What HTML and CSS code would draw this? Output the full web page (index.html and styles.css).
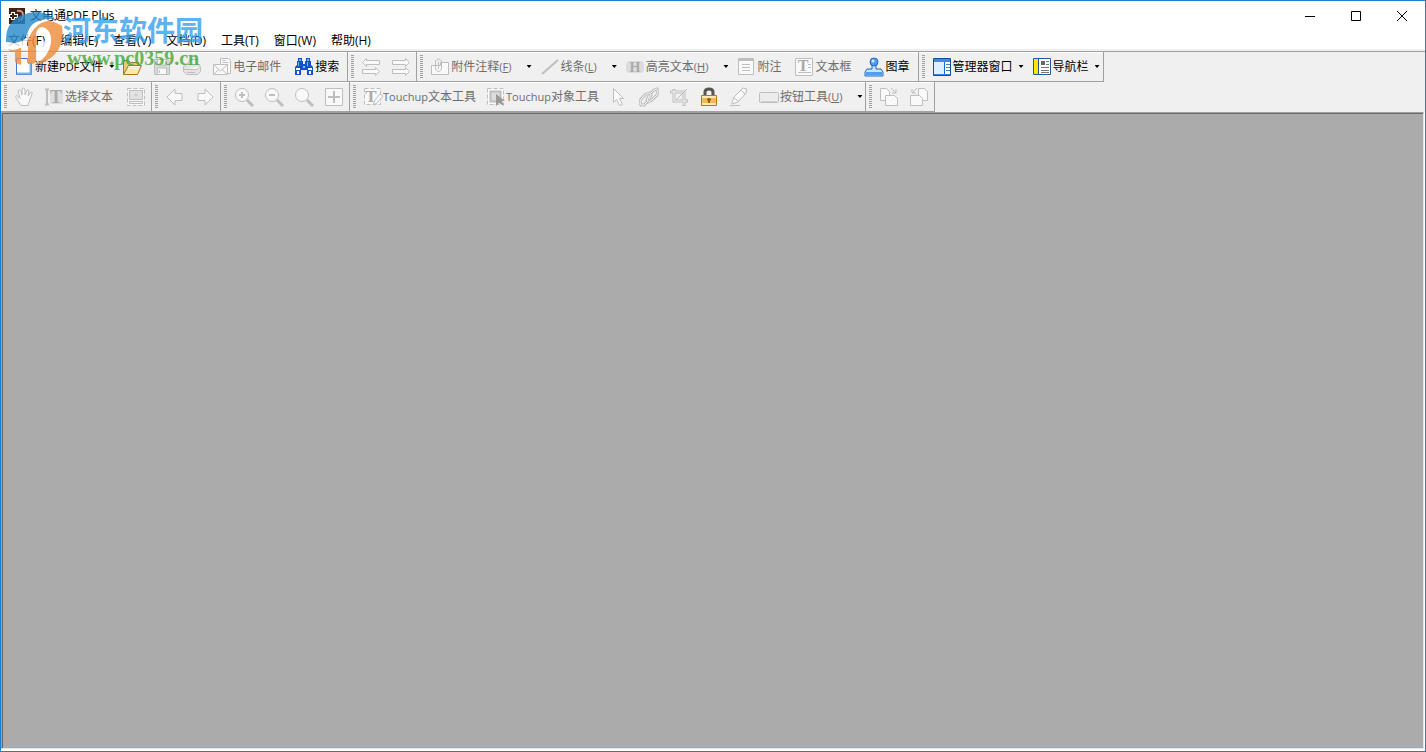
FILE: index.html
```html
<!DOCTYPE html>
<html lang="zh-CN">
  <head>
    <meta charset="utf-8">
    <title>文电通PDF Plus</title>
    <link rel="stylesheet" href="styles.css">
  </head>

  <body>
    <div class="titlebar">
      <svg class="app-icon" viewBox="0 0 16 16"><rect width="16" height="16" fill="#402219"/><path d="M4 4v8M0 8h9" stroke="#fff" stroke-width="4"/><path d="M4 5v6M1 8h7" stroke="#402219" stroke-width="2"/><path d="M8 3q6-1 6 4t-5 5" stroke="#c99b82" fill="none" stroke-width="2"/></svg>
      <h1>文电通PDF Plus</h1>
      <div class="window-buttons">
        <button aria-label="最小化"><svg viewBox="0 0 12 12"><path d="M1 6.500h10"/></svg></button>
        <button aria-label="最大化"><svg viewBox="0 0 12 12"><path d="M1.500 1.500h9v9h-9z"/></svg></button>
        <button aria-label="关闭"><svg viewBox="0 0 12 12"><path d="M1 1l10 10M11 1L1 11"/></svg></button>
      </div>
    </div>
    <nav class="menu">
      <button>文件(F)</button>
      <button>编辑(E)</button>
      <button>查看(V)</button>
      <button>文档(D)</button>
      <button>工具(T)</button>
      <button>窗口(W)</button>
      <button>帮助(H)</button>
    </nav>

    <div class="toolbars">
      <div class="row">
        <div class="group">
          <button class="drop">
            <svg class="icon" viewBox="0 0 20 20"><path d="M2.500 1.500h11l4 4v12h-15z" fill="#fff" stroke="#3d78c8"/><path d="M3 16.500h14M16.500 6v11" stroke="#70b5f3" stroke-width="2"/><path d="M13.500 1.500v4h4" fill="#dcebfa" stroke="#86a9d0"/></svg>
            <span>新建<small>PDF</small>文件</span><i class="arrow"></i>
          </button>
          <button aria-label="打开">
            <svg class="icon" viewBox="0 0 20 20"><path d="M1.500 17.500v-14h5l2 2h8v4" fill="#f0c878" stroke="#a8751c"/><path d="M1.500 17.500l5-9h13l-4 9z" fill="#ffe9a8" stroke="#a8751c"/><path d="M7 9.500h11M6 11.500h11" stroke="#fff8dc"/></svg>
          </button>
          <button class="off" aria-label="保存">
            <svg class="icon" viewBox="0 0 20 20"><path d="M2.500 2.500h13l2 2v13h-15z" fill="#d9d9d9"/><path d="M5.500 3v5h9V3" fill="#f4f4f4"/><path d="M5.500 17v-6h9v6M7.500 13v3"/></svg>
          </button>
          <button class="off" aria-label="打印">
            <svg class="icon" viewBox="0 0 20 20"><path d="M5 9l3-6.500h8L14 9z"/><path d="M1.500 9.500l3-2h13l1 3v4l-3 3h-11l-3-3z" fill="#e4e4e4"/><path d="M2 12.500h13l3-3M5 15.500h8"/></svg>
          </button>
          <button class="off">
            <svg class="icon" viewBox="0 0 20 20"><path d="M8.500 8V1.500h8l2 2v13h-4"/><path d="M10.500 3.500h3M10.500 5.500h6"/><path d="M1.500 7.500h14v10h-14z"/><path d="M2 8l6.500 6L15 8M2 17l5-4.500M15 17l-5-4.500" fill="none"/></svg>
            <span>电子邮件</span>
          </button>
          <button>
            <svg class="icon" viewBox="0 0 20 20"><path d="M4 1h4v3h1v3h2V4h1V1h4v3h1v4l2 2v8h-6v-5H7v5H1v-8l2-2V4h1z" fill="#1551c7"/><path d="M5 2h2v2H5zM13 2h2v2h-2z" fill="#62b5ef"/><path d="M2 11h4v2H2zM14 11h4v2h-4zM3 14h2v3H3zM15 14h2v3h-2z" fill="#fff"/><path d="M4 5h1v4H4zM13 5h1v4h-1zM9 9h2v2H9z" fill="#75c2fb"/></svg>
            <span>搜索</span>
          </button>
        </div>
        <div class="group off">
          <button aria-label="撤销">
            <svg class="icon" viewBox="0 0 20 20"><path d="M1.500 5.500l4-4v2h13v4h-13v2zM18.500 14.500l-4-4v2h-13v4h13v2z"/></svg>
          </button>
          <button aria-label="重做">
            <svg class="icon" viewBox="0 0 20 20"><path d="M18.500 5.500l-4-4v2h-13v4h13v2zM18.500 14.500l-4-4v2h-13v4h13v2z"/></svg>
          </button>
        </div>
        <div class="group">
          <button class="drop wide off">
            <svg class="icon" viewBox="0 0 20 20"><path d="M1.500 8.500h9v-3h8v12h-17z"/><path d="M5.500 6v6q3 5 6 0V4q-3-4-6 0v8M8.500 5v7" fill="none"/></svg>
            <span>附件注释<small>(<u>F</u>)</small></span><i class="arrow"></i>
          </button>
          <button class="drop wide off">
            <svg class="icon" viewBox="0 0 20 20"><path d="M2 17L18 3" stroke-width="2"/></svg>
            <span>线条<small>(<u>L</u>)</small></span><i class="arrow"></i>
          </button>
          <button class="drop wide off">
            <svg class="icon" viewBox="0 0 20 20"><rect x="1" y="4" width="18" height="12" rx="4" fill="#dcdcdc" stroke="none"/><text x="10" y="15" font-size="14">H</text></svg>
            <span>高亮文本<small>(<u>H</u>)</small></span><i class="arrow"></i>
          </button>
          <button class="off">
            <svg class="icon" viewBox="0 0 20 20"><path d="M2.500 1.500h15v16h-15z"/><path d="M3 3h14" stroke-width="2"/><path d="M6 7.500h8M6 10.500h8M6 13.500h8"/></svg>
            <span>附注</span>
          </button>
          <button class="off">
            <svg class="icon" viewBox="0 0 20 20"><path d="M1.500 1.500h17v17h-17z"/><text x="9" y="14" font-size="16">T</text><path d="M14 7.500h3M14 10.500h3M4 15.500h13"/></svg>
            <span>文本框</span>
          </button>
          <button>
            <svg class="icon" viewBox="0 0 20 20"><path d="M8 8h4v4h5l2 3v4H1v-4l2-3h5z" fill="#c4e4ff" stroke="#2467bb"/><circle cx="10" cy="5" r="4" fill="#4d9ff0" stroke="#2467bb"/><circle cx="9" cy="4" r="1.500" fill="#d5efff"/><path d="M2 16.500h16" stroke="#4d9ff0" stroke-width="3"/></svg>
            <span>图章</span>
          </button>
        </div>
        <div class="group">
          <button class="drop">
            <svg class="icon" viewBox="0 0 20 20"><path d="M1.500 1.500h17v17h-17z" fill="#fff" stroke="#164b9b"/><path d="M2 3.500h16" stroke="#4788dc" stroke-width="3"/><path d="M2 5h10v13H2z" fill="#deefff"/><path d="M12.500 5v13" stroke="#1a64dd"/><path d="M14 7.500h4M14 10.500h4M14 13.500h4" stroke="#527da9"/><path d="M2 17.500h16" stroke="#3785e5"/></svg>
            <span>管理器窗口</span><i class="arrow"></i>
          </button>
          <button class="drop">
            <svg class="icon" viewBox="0 0 20 20"><path d="M1.500 1.500h17v16h-17z" fill="#fff" stroke="#2a55a0"/><path d="M2 2h4v15H2z" fill="#ffe600"/><path d="M6.500 2v15" stroke="#284c86"/><path d="M9 4h4v4H9z" fill="#696969"/><path d="M14 4.500h3M14 7.500h3M9 10.500h8M9 13.500h8M9 15.500h8" stroke="#777"/></svg>
            <span>导航栏</span><i class="arrow"></i>
          </button>
        </div>
      </div>

      <div class="row">
        <div class="group off">
          <button aria-label="手形工具">
            <svg class="icon" viewBox="0 0 20 20"><path d="M7 18.500l-5-8q-1-2 1-2l3 3L4 4q1-3 3 0l1 4V2q2-2 3 0v6l2-5q2-1 2 1l-1 5 3-4q2 0 1 2l-3 8-1 3.500z"/></svg>
          </button>
          <button>
            <svg class="icon" viewBox="0 0 20 20"><path d="M6 3h13v14H6z" fill="#dedede" stroke="none"/><path d="M1 2.500h4M1 17.500h4M3 3v14" stroke-width="2"/><text x="12" y="16" font-size="18">T</text></svg>
            <span>选择文本</span>
          </button>
          <button aria-label="快照">
            <svg class="icon" viewBox="0 0 20 20"><path d="M1.500 1.500h17v17h-17z" stroke-dasharray="4 2"/><path d="M3.500 3.500h13v9h-13z" fill="#e2e2e2"/><path d="M3.500 14.500h13v2h-13z"/><circle cx="10" cy="8" r="1"/></svg>
          </button>
        </div>
        <div class="group off">
          <button aria-label="上一视图">
            <svg class="icon" viewBox="0 0 20 20"><path d="M2 10l8-8v4.500h7v7h-7V18z"/></svg>
          </button>
          <button aria-label="下一视图">
            <svg class="icon" viewBox="0 0 20 20"><path d="M18 10l-8-8v4.500H3v7h7V18z"/></svg>
          </button>
        </div>
        <div class="group off">
          <button aria-label="放大">
            <svg class="icon" viewBox="0 0 20 20"><path d="M13 13l6 6" stroke-width="3"/><circle cx="8" cy="8" r="6.500"/><path d="M5 8h6M8 5v6" stroke-width="2"/></svg>
          </button>
          <button aria-label="缩小">
            <svg class="icon" viewBox="0 0 20 20"><path d="M13 13l6 6" stroke-width="3"/><circle cx="8" cy="8" r="6.500"/><path d="M5 8h6" stroke-width="2"/></svg>
          </button>
          <button aria-label="缩放">
            <svg class="icon" viewBox="0 0 20 20"><path d="M13 13l6 6" stroke-width="3"/><circle cx="8" cy="8" r="6.500"/></svg>
          </button>
          <button aria-label="适合页面">
            <svg class="icon" viewBox="0 0 20 20"><path d="M1.500 1.500h17v17h-17z"/><path d="M4 10h12M10 4v12" stroke-width="2"/></svg>
          </button>
        </div>
        <div class="group">
          <button class="touchup off">
            <svg class="icon" viewBox="0 0 20 20"><path d="M1.500 1.500h16v16h-16z" stroke-dasharray="4 2"/><text x="8" y="15" font-size="17">T</text><path d="M10 18l2-5 5-6 3 2-6 7z"/></svg>
            <span><small>Touchup</small>文本工具</span>
          </button>
          <button class="touchup off">
            <svg class="icon" viewBox="0 0 20 20"><path d="M1.500 1.500h16v16h-16z" stroke-dasharray="4 2"/><path d="M4.500 4.500h10v10h-10z" fill="#ddd" stroke-width="2"/><path d="M10 7v12l3-3 5 3-2-5h3z" fill="#999" stroke="none"/></svg>
            <span><small>Touchup</small>对象工具</span>
          </button>
          <button class="off" aria-label="选择工具">
            <svg class="icon" viewBox="0 0 20 20"><path d="M4.500 1.500v14l3-3 3 6 3-1-3-6h4z"/></svg>
          </button>
          <button class="off" aria-label="链接工具">
            <svg class="icon" viewBox="0 0 20 20"><path d="M8 15l-3 3H2l-1-2 1-4 5-5 4-1 1 2-2 4M12 6l3-3 3-1 1 2-1 4-5 5-4 2-1-2 2-4" fill="none" stroke-width="3"/><path d="M8 15l-3 3H2l-1-2 1-4 5-5 4-1 1 2-2 4M12 6l3-3 3-1 1 2-1 4-5 5-4 2-1-2 2-4" fill="none" stroke="#f4f4f4"/></svg>
          </button>
          <button class="off" aria-label="裁剪工具">
            <svg class="icon" viewBox="0 0 20 20"><path d="M1 5h14v14M5 2v12h14" fill="none" stroke-width="3"/><path d="M2 5h13v13M5 3v11h13" fill="none" stroke="#f4f4f4"/><path d="M7 13L18 2"/></svg>
          </button>
          <button aria-label="安全设置">
            <svg class="icon" viewBox="0 0 20 20"><path d="M6 10V5q0-3 4-3t4 3v5" fill="none" stroke="#555" stroke-width="3"/><path d="M2.500 8.500h15v10h-15z" fill="#efba57" stroke="#b87905"/><path d="M3 10h14M3 17h14" stroke="#ffe9b5" stroke-width="2"/><path d="M10 11v5M8 12.500h4" stroke="#9a6100" stroke-width="2"/></svg>
          </button>
          <button class="off" aria-label="签名">
            <svg class="icon" viewBox="0 0 20 20"><path d="M3 15l2-5L14 1l4 1-1 4-8 9-6 2zM5 11l4 3M12 3l4 4"/><path d="M1 18.500h10"/></svg>
          </button>
          <button class="drop wide off">
            <svg class="icon" viewBox="0 0 20 20"><rect x=".5" y="5.500" width="19" height="10" rx="1" fill="#ececec"/><path d="M2 14.500h16" stroke="#d0d0d0"/></svg>
            <span>按钮工具<small>(<u>U</u>)</small></span><i class="arrow"></i>
          </button>
        </div>
        <div class="group off">
          <button aria-label="插入页面">
            <svg class="icon" viewBox="0 0 20 20"><path d="M1.500 1.500h6l3 3v9h-9z"/><path d="M6.500 8.500h9l3 3v7h-12z"/><path d="M12 1l5 5M17 2v4h-4" fill="none"/></svg>
          </button>
          <button aria-label="提取页面">
            <svg class="icon" viewBox="0 0 20 20"><path d="M9.500 1.500h6l3 3v9h-9z"/><path d="M1.500 8.500h9l3 3v7h-12z"/><path d="M8 1L3 6M3 2v4h4" fill="none"/></svg>
          </button>
        </div>
      </div>
    </div>

    <main class="workspace"></main>

    <div class="stamp">
      <svg viewBox="0 0 58 56"><path d="M1 32Q0 12 17 5 37-3 51 10q-12-3-21 4-7 5-10 15-8 6-19 3z" fill="#2589cb"/><path d="M26 17q14-12 31-1 3 23-13 33-6 5-14 6 14-9 14-24 0-13-7-14-5 0-6 8v27q-4 3-8 2V32q0-9 3-15zM3 39q7 3 13-2v18q-4-1-6-3V42q-5 0-7-3z" fill="#ef8b38"/><path d="M2 32Q21 36 23 22q4-14 25-12-13 1-19 9-4 5-7 14-7 8-19 5z" fill="#fff"/><path d="M37 17q10 2 9 16-2 13-14 20-1-9 0-17 10-3 9-12 0-5-4-7z" fill="#fff"/></svg>
      <div>
        <div class="site">河东软件园</div>
        <div class="url">www.pc0359.cn</div>
      </div>
    </div>
  </body>
</html>
```

FILE: styles.css
```css
*, *:before, *:after {
  box-sizing: border-box;
}
body {
  display: flex;
  flex-direction: column;
  position: relative;
  margin: 0;
  min-height: 100vh;
  border: 1px solid #1c7fd0;
  font-family: "Open Sans", "Noto Sans CJK SC", sans-serif;
  font-size: 12px;
  line-height: 20px;
  color: #000;
  background: #fff;
}
button {
  display: flex;
  align-items: center;
  margin: 0;
  border: 0;
  padding: 0;
  font: inherit;
  color: inherit;
  background: none;
  white-space: nowrap;
}
.titlebar {
  display: flex;
  align-items: center;
  height: 30px;
  padding-left: 8px;
}
.app-icon {
  width: 16px;
  height: 16px;
  margin-right: 5px;
}
h1 {
  flex: 1;
  margin: 0;
  font-size: 12px;
  font-weight: normal;
}
.window-buttons {
  display: flex;
}
.window-buttons button {
  justify-content: center;
  width: 46px;
  height: 30px;
}
.window-buttons svg {
  width: 12px;
  height: 12px;
  fill: none;
  stroke: #000;
}
.menu {
  display: flex;
  gap: 1px;
  height: 18px;
}
.menu button {
  display: block;
  padding: 0 7px;
}
.toolbars {
  border-top: 1px solid #a0a0a0;
  background: #f0f0f0;
  box-shadow: 0 -2px #f0f0f0;
  margin-top: 2px;
}
.row {
  display: flex;
  height: 30px;
}
.group {
  display: flex;
  position: relative;
  padding-left: 8px;
  border-right: 1px solid #a0a0a0;
  border-bottom: 1px solid #a0a0a0;
  box-shadow: inset 0 1px #fff;
}
/* dotted drag handle */
.group:before {
  content: "";
  position: absolute;
  top: 3px;
  bottom: 3px;
  left: 3px;
  width: 3px;
  background: repeating-linear-gradient(#a0a0a0 0, #a0a0a0 1px, #f0f0f0 1px, #f0f0f0 2px);
}
.group button {
  padding: 0 5px;
}
.group span {
  margin-left: 1px;
  padding-right: 3px;
}
.group small {
  font-size: 11px;
}
.icon {
  flex: none;
  width: 20px;
  height: 20px;
}
.group .drop {
  padding-right: 3px;
}
.group .drop span {
  padding-right: 6px;
}
.group .wide span {
  padding-right: 15px;
}
.group .touchup span {
  margin-left: 0;
  padding-right: 0;
}
.arrow {
  width: 5px;
  height: 3px;
  background: #000;
  clip-path: polygon(0 0, 100% 0, 50% 100%);
}
.off {
  color: #6d6d6d;
}
.off .icon {
  fill: #f9f9f9;
  stroke: #bebebe;
}
.off text {
  fill: #aaa;
  stroke: none;
  font-family: "Liberation Serif", serif;
  font-weight: bold;
  text-anchor: middle;
}
.workspace {
  flex: 1;
  margin: 0 1px 2px 0;
  border: 1px solid;
  border-color: #a0a0a0 #e3e3e3 #e3e3e3 #a0a0a0;
  background: #ababab;
  box-shadow: inset 1px 1px #696969;
}
/* translucent site mark lying over the menu and toolbar */
.stamp {
  display: flex;
  position: absolute;
  top: 9px;
  left: 4px;
  opacity: .8;
  pointer-events: none;
}
.stamp svg {
  width: 58px;
  height: 56px;
}
.site {
  font-family: "Noto Sans CJK SC", sans-serif;
  font-size: 28px;
  font-weight: bold;
  line-height: 38px;
  color: #38a0ed;
}
.url {
  padding-left: 4px;
  font-family: "Liberation Serif", serif;
  font-size: 20px;
  font-weight: bold;
  line-height: 20px;
  color: #43a735;
}
```
